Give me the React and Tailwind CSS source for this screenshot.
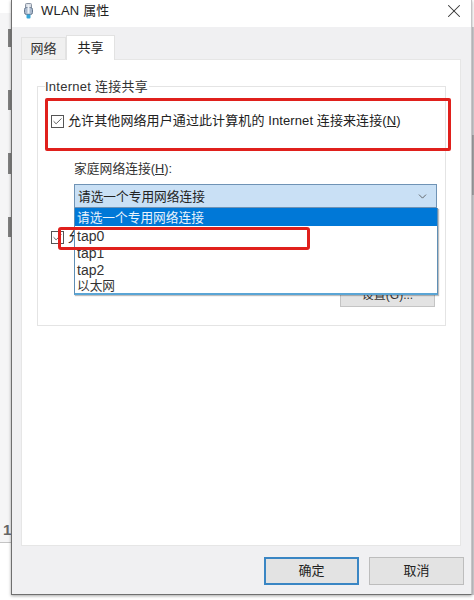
import { Check, ChevronDown, X } from "lucide-react";

const FONT = "[font-family:'Liberation_Sans','Noto_Sans_CJK_SC',sans-serif]";

function Checkbox() {
  return (
    <span className="w-[13px] h-[13px] shrink-0 border border-[#555] bg-white flex items-center justify-center">
      <Check size={13} strokeWidth={1.7} className="text-[#333]" />
    </span>
  );
}

function UsbIcon() {
  return (
    <svg width="9" height="16" viewBox="0 0 9 16" className="shrink-0">
      <rect x="1.5" y="0.5" width="6" height="5" rx="1" fill="#d5dae2" stroke="#8a94a3" />
      <rect x="0.5" y="4.5" width="8" height="7" rx="2" fill="#a9b8cc" stroke="#66788e" />
      <rect x="3.5" y="1.5" width="2" height="9" fill="#eef2f7" />
      <rect x="2.5" y="11.5" width="4" height="4" rx="1" fill="#35a6d8" />
    </svg>
  );
}

function Tab({ active, children }) {
  return active ? (
    <div className="w-[49px] h-[25px] -mb-px z-10 bg-white border border-b-0 border-[#e2e2e2] text-[#222] text-[13px] flex items-center justify-center">
      {children}
    </div>
  ) : (
    <div className="w-[45px] h-[22px] bg-[#f0f0f0] border border-b-0 border-[#e2e2e2] text-[#333] text-[13px] flex items-center justify-center">
      {children}
    </div>
  );
}

function WinButton({ primary, children }) {
  return (
    <div
      className={`w-[95px] h-[28px] bg-[#e3e3e3] text-[13px] text-[#222] flex items-center justify-center border ${
        primary ? "border-[#3a86c4] border-2" : "border-[#bdbdbd]"
      }`}
    >
      {children}
    </div>
  );
}

export default function App() {
  return (
    <div className={`relative w-[474px] h-[600px] overflow-hidden bg-white ${FONT}`}>
      {/* What is left of the window behind the dialog */}
      <div className="absolute left-0 top-[13px] w-[11px] h-[530px] bg-[#f5f5f6] border-b border-[#c4c4c4]">
        <span className="absolute left-[3px] top-[506px] text-[15px] font-bold text-[#666]">1</span>
      </div>
      <div className="absolute left-[8px] top-[29px] w-[3px] h-[18px] bg-[#808080]" />
      <div className="absolute left-[8px] top-[90px] w-[3px] h-[20px] bg-[#808080]" />
      <div className="absolute left-[8px] top-[153px] w-[3px] h-[21px] bg-[#808080]" />
      <div className="absolute left-[8px] top-[217px] w-[3px] h-[20px] bg-[#808080]" />
      <div className="absolute left-[472px] top-[27px] w-[2px] h-[568px] bg-[#cfcfd2]" />
      <div className="absolute left-[472px] top-[135px] w-[2px] h-[60px] bg-[#a6a6a8]" />

      {/* Dialog */}
      <div className="absolute left-[11px] top-0 w-[461px] h-[595px] flex flex-col bg-[#f0f0f2] border-l border-r border-b border-[#6f6f6f] border-r-[#c4c4c6] shadow-[0_1px_3px_rgba(0,0,0,0.35)]">
        <div className="h-[27px] shrink-0 bg-white flex items-center pl-[12px] pr-[6px] pb-[6px] gap-[8px]">
          <UsbIcon />
          <span className="text-[13px] text-[#222] tracking-[0.2px]">WLAN 属性</span>
          <X size={22} strokeWidth={1.1} className="ml-auto text-[#333]" />
        </div>

        <div className="flex items-end ml-[9px] mt-[7px] h-[25px] shrink-0">
          <Tab>网络</Tab>
          <Tab active>共享</Tab>
        </div>

        <div className="mx-[9px] w-[440px] h-[487px] shrink-0 bg-white border border-[#e6e6e6] pt-[26px] pl-[15px]">
          {/* Group box */}
          <div className="relative w-[409px] h-[240px] border border-[#e4e4e4]">
            <span className="absolute left-[7px] -top-[9px] bg-white pr-px text-[13px] leading-[17px] text-[#333] tracking-[0.25px]">
              Internet 连接共享
            </span>

            <div className="flex items-center gap-[4px] pl-[13px] pt-[26px]">
              <Checkbox />
              <span className="text-[13px] leading-[16px] text-[#222] whitespace-nowrap tracking-[0.1px]">
                允许其他网络用户通过此计算机的 Internet 连接来连接(<span className="underline">N</span>)
              </span>
            </div>

            <div className="pl-[36px] pt-[32px] text-[12.8px] leading-[16px] text-[#333]">
              家庭网络连接(<span className="underline">H</span>):
            </div>

            <div className="ml-[36px] mt-[7px] w-[363px] h-[24px] bg-[#c9e0f5] border border-[#6f93b5] flex items-center pl-[3px] pr-[7px] text-[12.7px] text-[#222]">
              <span className="pt-[3px]">请选一个专用网络连接</span>
              <ChevronDown size={13} strokeWidth={1.4} className="ml-auto text-[#444]" />
            </div>

            <div className="flex items-center gap-[4px] pl-[13px] pt-[21px]">
              <Checkbox />
              <span className="text-[13px] leading-[16px] text-[#222]">允</span>
            </div>

            <div className="ml-[302px] mt-[37px] w-[95px] h-[25px] bg-[#e3e3e3] border border-[#c4c4c4] text-[12px] text-[#333] flex items-center justify-center">
              设置(G)...
            </div>

            {/* Open dropdown list */}
            <div className="absolute left-[36px] top-[121px] w-[364px] h-[87px] bg-white border border-[#5f8fb5] border-t-0 border-b-2 border-b-[#5aa5d5] shadow-[1px_1px_1px_rgba(0,0,0,0.25)] text-[12.7px] leading-[17px] text-[#333]">
              <div className="h-[18px] bg-[#0078d7] text-[#e8f3fc] pl-[2px] pt-[2px]">请选一个专用网络连接</div>
              <div className="pl-[2px] mt-[2px] text-[14px]">tap0</div>
              <div className="pl-[2px] text-[14px]">tap1</div>
              <div className="pl-[2px] text-[14px]">tap2</div>
              <div className="pl-[2px] -mt-px">以太网</div>
            </div>
          </div>
        </div>

        <div className="flex justify-end gap-[10px] pr-[7px] mt-[11px]">
          <WinButton primary>确定</WinButton>
          <WinButton>取消</WinButton>
        </div>
      </div>

      {/* Red annotations drawn over the screenshot */}
      <div className="absolute left-[45px] top-[98px] w-[406px] h-[53px] border-[3px] border-[#e0201c] rounded-[2px]" />
      <div className="absolute left-[58px] top-[227px] w-[252px] h-[23px] border-[3px] border-[#e0201c] rounded-[3px]" />
    </div>
  );
}
